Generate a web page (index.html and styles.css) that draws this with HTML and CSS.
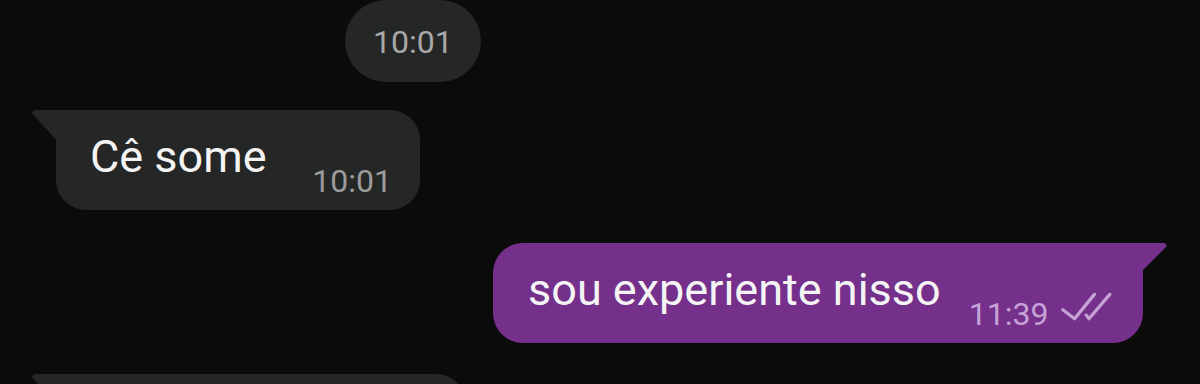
FILE: index.html
```html
<!DOCTYPE html>
<html lang="pt">
<head>
<meta charset="utf-8">
<link rel="stylesheet" href="styles.css">
</head>
<body>
<div class="chat">
  <div class="pill">10:01</div>

  <div class="bubble in first">
    <span class="msg">Cê some</span>
    <span class="time">10:01</span>
  </div>

  <div class="bubble out">
    <span class="msg">sou experiente nisso</span>
    <span class="time">11:39</span>
    <svg class="checks" width="56" height="32" viewBox="0 0 56 32" aria-hidden="true">
      <path d="M2 19 L15 29 L37 2" fill="none" stroke="#c7a2d6" stroke-width="3.6" stroke-linecap="round" stroke-linejoin="round"/>
      <path d="M28 25 L31 29 L54 2" fill="none" stroke="#c7a2d6" stroke-width="3.6" stroke-linecap="round" stroke-linejoin="round"/>
    </svg>
  </div>

  <div class="bubble in last"></div>
</div>
</body>
</html>
```

FILE: styles.css
```css
html, body {
  margin: 0;
  padding: 0;
  height: 100%;
  overflow: hidden;
  background: #0b0b0b;
}

.chat {
  display: flex;
  flex-direction: column;
  align-items: flex-start;
  font-family: Roboto, "Liberation Sans", sans-serif;
}

.pill {
  margin-left: 345px;
  height: 82px;
  padding: 24px 28px 0 28px;
  border-radius: 41px;
  background: #252626;
  color: #a8a8a8;
  font-size: 32px;
  line-height: 36px;
  display: flex;
  align-items: flex-start;
  box-sizing: border-box;
}

.bubble {
  position: relative;
  display: flex;
  align-items: flex-start;
  height: 100px;
  box-sizing: border-box;
}

.msg {
  font-size: 45px;
  line-height: 52px;
  margin-top: 21px;
  color: #f4f4f4;
  white-space: nowrap;
}

.time {
  font-size: 32px;
  line-height: 36px;
  margin-top: 53px;
  white-space: nowrap;
}

.in {
  background: #252626;
  border-radius: 0 30px 30px 30px;
  margin-left: 56px;
}

.in::before {
  content: "";
  position: absolute;
  left: -24px;
  top: 0;
  width: 25px;
  height: 31px;
  background: #252626;
  clip-path: polygon(0 3px, 2px 0, 100% 0, 100% 100%);
}

.in .time {
  color: #9c9c9c;
}

.first {
  margin-top: 28px;
  width: 364px;
  padding: 0 28px 0 34px;
  justify-content: space-between;
}

.out {
  align-self: flex-end;
  margin-right: 57px;
  margin-top: 33px;
  width: 650px;
  padding: 0 31px 0 35px;
  background: #74308a;
  border-radius: 30px 0 30px 30px;
}

.out::before {
  content: "";
  position: absolute;
  right: -24px;
  top: 0;
  width: 25px;
  height: 28px;
  background: #74308a;
  clip-path: polygon(0 0, calc(100% - 2px) 0, 100% 3px, 0 100%);
}

.out .msg {
  margin-right: 28px;
}

.out .time {
  color: #c7a2d6;
  margin-right: 13px;
}

.checks {
  margin-top: 48px;
}

.last {
  margin-top: 31px;
  width: 410px;
}
```
